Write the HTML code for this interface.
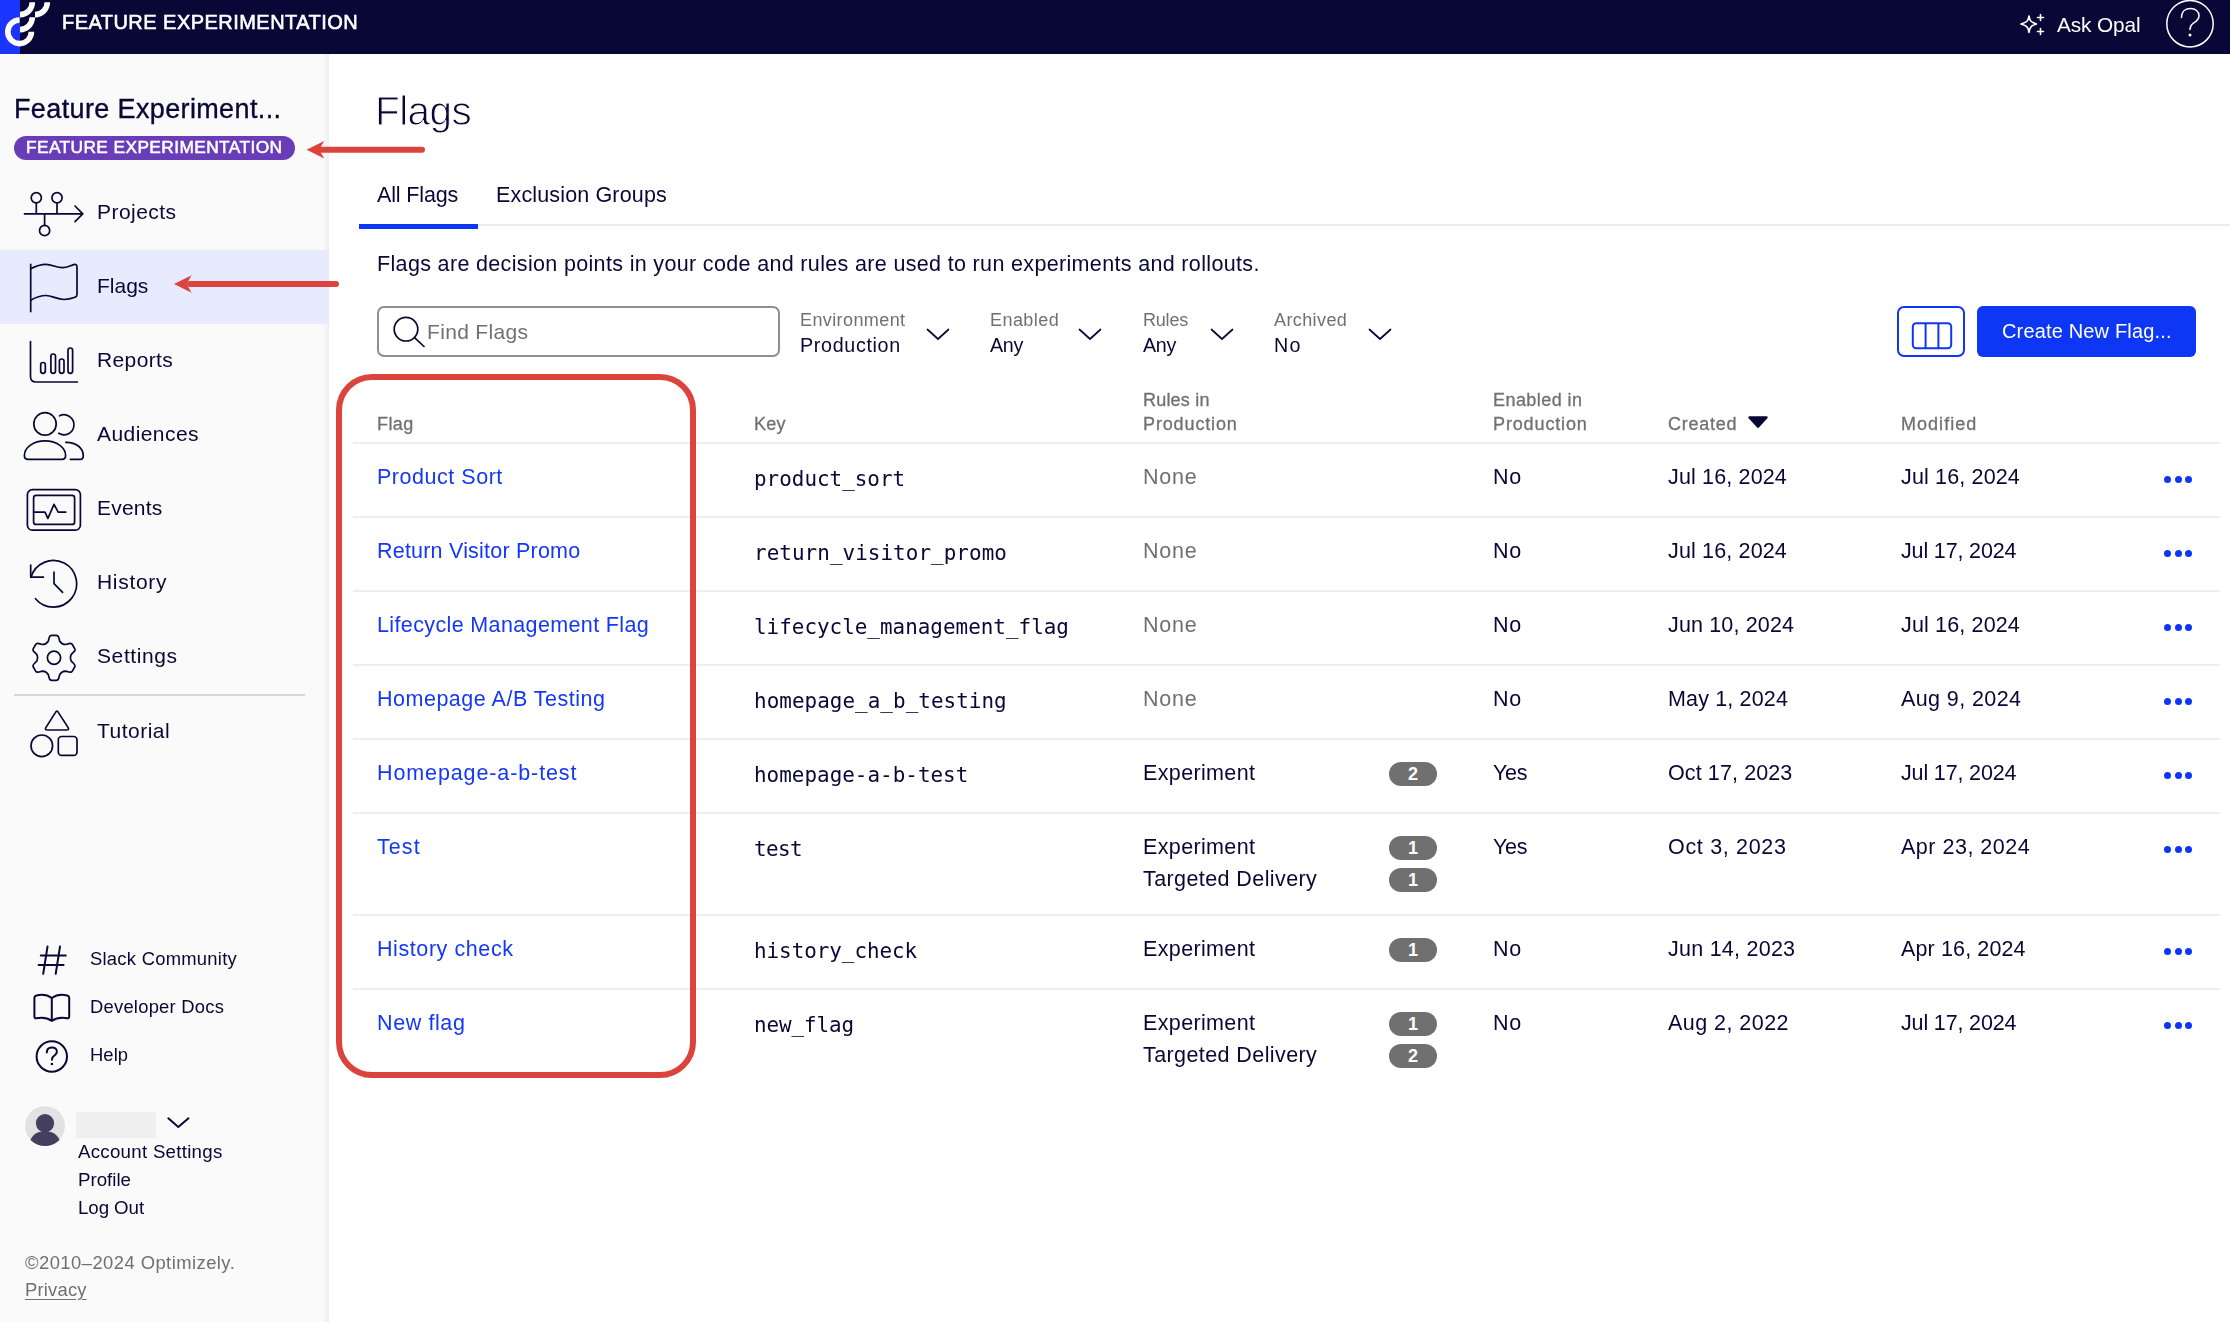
<!DOCTYPE html>
<html lang="en">
<head>
<meta charset="utf-8">
<title>Flags - Feature Experimentation</title>
<style>
*{box-sizing:border-box;margin:0;padding:0}
html,body{width:2230px;height:1322px;overflow:hidden;background:#fff}
body{font-family:"Liberation Sans",Arial,sans-serif;color:#080736;font-size:21.5px;letter-spacing:.35px;position:relative}
.t{position:absolute;white-space:nowrap;line-height:1;will-change:transform}
svg{position:absolute;overflow:visible}
.ic{fill:none;stroke:#080736;stroke-width:1.7;stroke-linecap:round;stroke-linejoin:round}
/* header */
#hdr{position:absolute;left:0;top:0;width:2230px;height:54px;background:#080736}
#stripe{position:absolute;left:0;top:0;width:20px;height:54px;background:#1a35ff}
#brand{left:62px;top:11.9px;font-size:20px;color:#fff;letter-spacing:.12px;-webkit-text-stroke:.6px #fff}
#ask{left:2057px;top:14.8px;font-size:20.8px;color:#fff;letter-spacing:0}
/* sidebar */
#side{position:absolute;left:0;top:54px;width:329px;height:1268px;background:#fafafa;box-shadow:inset -7px 0 6px -5px rgba(0,0,0,.07)}
#proj{left:14px;top:95.9px;font-size:27px;letter-spacing:.2px;-webkit-text-stroke:.35px #080736}
#pill{position:absolute;left:14px;top:136px;width:281px;height:24px;border-radius:12px;background:#6a3db8}
#pilltxt{left:25.5px;top:139.4px;font-size:17.3px;font-weight:400;color:#fff;letter-spacing:.15px;-webkit-text-stroke:.55px #fff}
#active{position:absolute;left:0;top:250px;width:329px;height:74px;background:#e8eafd}
.nav{left:97px;font-size:21px}
#sep{position:absolute;left:14px;top:694px;width:291px;height:2px;background:#d6d6d6}
.sm{font-size:18.4px;letter-spacing:.3px;left:90px}
.acc{font-size:18.7px;letter-spacing:.3px;left:78px}
.cp{font-size:18.4px;letter-spacing:.3px;left:25px;color:#707070}
/* main */
#title{left:375px;top:90.5px;font-size:40.5px;letter-spacing:-.6px;color:#080736;-webkit-text-stroke:1px #fff}
.tab{font-size:21.5px;letter-spacing:.2px}
#tabline{position:absolute;left:359px;top:224px;width:1871px;height:2px;background:#ececec}
#tabsel{position:absolute;left:359px;top:224px;width:119px;height:5px;background:#0d37f5}
#search{position:absolute;left:377px;top:306px;width:403px;height:51px;border:2px solid #8f8f8f;border-radius:7px;background:#fff}
.fl{font-size:18px;letter-spacing:.3px;color:#707070}
.fv{font-size:19.7px;letter-spacing:.35px}
#colbtn{position:absolute;left:1897px;top:306px;width:68px;height:51px;border:2px solid #0d37f5;border-radius:7px}
#create{position:absolute;left:1977px;top:306px;width:219px;height:51px;border-radius:6px;background:#0d37f5}
#createtxt{left:2002px;top:321px;font-size:20px;letter-spacing:.15px;color:#fff}
.th{font-size:18px;letter-spacing:.3px;color:#707070;-webkit-text-stroke:.3px #707070}
.hl{position:absolute;left:353px;width:1867px;height:2px;background:#eeeeee}
.lk{color:#1537f7;left:377px}
.key{font-family:"DejaVu Sans Mono","Liberation Mono",monospace;font-size:20.9px;letter-spacing:0;left:754px}
.rule{left:1143px}
.none{left:1143px;color:#707070}
.en{left:1493px}
.cr{left:1668px}
.md{left:1901px}
.bdg{position:absolute;left:1389px;width:48px;height:24px;border-radius:12px;background:#707070;color:#fff;font-size:18px;font-weight:700;text-align:center;line-height:24px;letter-spacing:0}
.dots{position:absolute;left:2164px;width:28px;height:8px}
.dots i{position:absolute;top:.2px;width:7px;height:7px;border-radius:50%;background:#0d37f5}
#redbox{position:absolute;left:336px;top:374px;width:360px;height:704px;border:6px solid #dc433d;border-radius:36px}
</style>
</head>
<body>
<div id="hdr"><div id="stripe"></div></div>
<div id="side"></div>
<div id="active"></div>
<!--HEADER-->
<svg id="logo" style="left:0;top:0" width="60" height="54" viewBox="0 0 60 54">
  <g fill="none" stroke="#fff" stroke-width="5.6">
    <path d="M19.6 20 A11.8 11.8 0 1 0 31.4 31.8"/>
    <path d="M20 29.6 A12.3 12.3 0 0 0 32.3 17.3"/>
    <path d="M20 14.6 A12.3 12.3 0 0 0 32.3 2.3"/>
    <path d="M35 14.6 A12.3 12.3 0 0 0 47.3 2.3"/>
  </g>
</svg>
<div class="t" id="brand" style="letter-spacing:0.46px;margin-left:0.0px">FEATURE EXPERIMENTATION</div>
<svg style="left:2018px;top:12px" width="30" height="26" viewBox="0 0 30 26">
  <g fill="none" stroke="#fff" stroke-width="1.6" stroke-linecap="round" stroke-linejoin="round">
    <path d="M11 4 C11.8 9 13 10.2 18.5 12 C13 13.8 11.8 15 11 20.5 C10.2 15 9 13.8 3 12 C9 10.2 10.2 9 11 4 Z"/>
    <path d="M22.5 2.5 v6 M19.5 5.5 h6"/>
    <path d="M22.5 16.5 v6 M19.5 19.5 h6"/>
  </g>
</svg>
<div class="t" id="ask" style="letter-spacing:-0.11px;margin-left:0.0px">Ask Opal</div>
<svg style="left:2164px;top:-2px" width="52" height="52" viewBox="0 0 52 52">
  <circle cx="26" cy="25.7" r="23.2" fill="none" stroke="#fff" stroke-width="1.5"/>
  <path d="M17.5 19.5 C17.5 13 22 10.5 26.5 10.5 C31.5 10.5 35 13.5 35 17.8 C35 22 32 23.5 29 25.5 C26.5 27.2 26 28.5 26 31.5" fill="none" stroke="#fff" stroke-width="1.5" stroke-linecap="round"/>
  <circle cx="26" cy="37" r="1.5" fill="#fff"/>
</svg>
<!--/HEADER-->
<!--SIDEBAR-->
<div class="t" id="proj" style="letter-spacing:0.37px;margin-left:0.0px">Feature Experiment...</div>
<div id="pill"></div>
<div class="t" id="pilltxt" style="letter-spacing:0.42px;margin-left:0.0px">FEATURE EXPERIMENTATION</div>
<!-- nav icons -->
<svg style="left:0;top:0" width="329" height="800" viewBox="0 0 329 800" class="ic">
  <!-- projects -->
  <circle cx="36.3" cy="197.7" r="5.1"/><circle cx="57" cy="197.7" r="5.1"/><circle cx="44.6" cy="230.5" r="5.1"/>
  <path d="M24.5 213.8 H82.5 M75 206 L82.8 213.8 L75 221.6 M36.3 202.8 V213.8 M57 202.8 V213.8 M44.6 213.8 V225.4"/>
  <!-- flag -->
  <path d="M30.7 264.4 V311.6"/>
  <path d="M30.7 268.8 C35 266.5 41 264.4 46 264.4 C52 264.4 56 267.7 62.4 267.7 C67 267.7 70.5 265.5 73.6 264.6 Q77 263.8 77 267 V294.5 Q77 296.5 75 297.3 C71 298.8 68 299.5 64 299.5 C57 299.5 52 295.5 46 295.5 C40 295.5 35 297.7 30.7 300.2"/>
  <!-- reports -->
  <path d="M30.5 341.5 V376.5 Q30.5 382 36 382 H77.4"/>
  <rect x="40.7" y="362.5" width="4.6" height="10.8" rx="2.3"/>
  <rect x="50.9" y="354" width="4.6" height="19.3" rx="2.3"/>
  <rect x="59.4" y="359" width="4.6" height="14.3" rx="2.3"/>
  <rect x="68" y="348" width="4.6" height="25.3" rx="2.3"/>
  <!-- audiences -->
  <circle cx="45" cy="423.9" r="11.2"/>
  <path d="M24.4 455.5 C24.4 447.3 33.6 440.8 45 440.8 C56.4 440.8 65.6 447.3 65.6 455.5 Q65.6 459.4 62 459.4 H28 Q24.4 459.4 24.4 455.5 Z"/>
  <path d="M59.6 415.8 A10 10 0 1 1 58.7 433.3"/>
  <path d="M65.8 442.3 C76 442 83.3 448 83.3 456 Q83.3 459.4 79.8 459.4 H70.4"/>
  <!-- events -->
  <rect x="27.4" y="489.6" width="53" height="40.6" rx="5"/>
  <rect x="33.6" y="495.4" width="41" height="29" rx="2.5"/>
  <path d="M33.6 512.1 H45 L47.9 518.4 L54 504.3 L58.2 512.1 H65.8"/>
  <!-- history -->
  <path d="M31 577.3 A23.3 23.3 0 1 1 35.5 598.7"/>
  <path d="M30.7 565 V577.2 H43.4"/>
  <path d="M54 572 V583.6 L62.6 592.4"/>
  <!-- settings -->
  <circle cx="54" cy="657.8" r="6.6"/>
  <path d="M48.27 641.16 L49.20 637.63 Q49.83 635.28 51.66 635.28 L56.34 635.28 Q58.17 635.28 58.80 637.63 L59.73 641.16 Q61.80 644.29 65.55 644.52 L69.07 643.56 Q71.41 642.93 72.33 644.52 L74.67 648.57 Q75.59 650.16 73.86 651.87 L71.28 654.44 Q69.60 657.80 71.28 661.16 L73.86 663.73 Q75.59 665.44 74.67 667.03 L72.33 671.08 Q71.41 672.67 69.07 672.04 L65.55 671.08 Q61.80 671.31 59.73 674.44 L58.80 677.97 Q58.17 680.32 56.34 680.32 L51.66 680.32 Q49.83 680.32 49.20 677.97 L48.27 674.44 Q46.20 671.31 42.45 671.08 L38.93 672.04 Q36.59 672.67 35.67 671.08 L33.33 667.03 Q32.41 665.44 34.14 663.73 L36.72 661.16 Q38.40 657.80 36.72 654.44 L34.14 651.87 Q32.41 650.16 33.33 648.57 L35.67 644.52 Q36.59 642.93 38.93 643.56 L42.45 644.52 Q46.20 644.29 48.27 641.16 Z" stroke-linejoin="round"/>
  <!-- tutorial -->
  <path d="M55.5 712.4 Q56.9 709.9 58.3 712.4 L68 727.4 Q69.6 730 66.6 730 H47.4 Q44.4 730 46 727.4 Z"/>
  <circle cx="41.8" cy="745.8" r="10.8"/>
  <rect x="58.3" y="736.5" width="18.7" height="18.8" rx="3.4"/>
</svg>
<div class="t nav" style="letter-spacing:0.46px;margin-left:0.0px;top:200.7px">Projects</div>
<div class="t nav" style="letter-spacing:-0.00px;margin-left:0.0px;top:274.7px">Flags</div>
<div class="t nav" style="letter-spacing:0.37px;margin-left:0.0px;top:348.7px">Reports</div>
<div class="t nav" style="letter-spacing:0.43px;margin-left:0.0px;top:422.7px">Audiences</div>
<div class="t nav" style="letter-spacing:0.20px;margin-left:0.0px;top:496.7px">Events</div>
<div class="t nav" style="letter-spacing:0.70px;margin-left:0.0px;top:570.7px">History</div>
<div class="t nav" style="letter-spacing:0.60px;margin-left:0.0px;top:644.7px">Settings</div>
<div id="sep"></div>
<div class="t nav" style="letter-spacing:0.49px;margin-left:0.0px;top:720.4px">Tutorial</div>
<!-- bottom links -->
<svg style="left:0;top:900px" width="329" height="260" viewBox="0 900 329 260" class="ic" stroke-width="2">
  <path d="M47.5 946.6 L43.2 973.8 M60 946.6 L55.7 973.8 M40.8 955.5 H65.8 M38.6 965 H63.6" stroke-width="2"/>
  <path d="M51.8 998 V1020.8 M51.8 998 C47 994.6 41 994.4 36.5 995.5 Q34.4 996 34.4 998 V1016.5 Q34.4 1018.6 36.5 1018.2 C42 1017.2 47 1017.6 51.8 1020.8 C56.6 1017.6 61.6 1017.2 67.1 1018.2 Q69.2 1018.6 69.2 1016.5 V998 Q69.2 996 67.1 995.5 C62.6 994.4 56.6 994.6 51.8 998" stroke-width="2"/>
  <circle cx="51.8" cy="1056.5" r="15.2" stroke-width="2"/>
  <path d="M46.8 1052.6 C46.8 1049 49.2 1047.4 51.9 1047.4 C54.8 1047.4 56.9 1049.2 56.9 1051.7 C56.9 1054.2 55.2 1055 53.6 1056.2 C52.2 1057.2 51.9 1058 51.9 1059.8" stroke-width="2"/>
  <circle cx="51.9" cy="1064" r="1.3" fill="#080736" stroke="none"/>
  <path d="M168.3 1118.3 L178.3 1127 L188.5 1118.3" stroke-width="2"/>
</svg>
<div class="t sm" style="letter-spacing:0.26px;margin-left:0.0px;top:950px">Slack Community</div>
<div class="t sm" style="letter-spacing:0.23px;margin-left:0.0px;top:998px">Developer Docs</div>
<div class="t sm" style="letter-spacing:0.07px;margin-left:0.0px;top:1046px">Help</div>
<svg style="left:24px;top:1105px" width="42" height="42" viewBox="0 0 42 42">
  <defs><clipPath id="avc"><circle cx="21" cy="21" r="20"/></clipPath></defs>
  <circle cx="21" cy="21" r="20.5" fill="#fff"/>
  <circle cx="21" cy="21" r="20" fill="#e2e2e2"/>
  <g clip-path="url(#avc)" fill="#43405f">
    <circle cx="21" cy="18.2" r="9.1"/>
    <path d="M4.5 44 C5 31 12 26.2 21 26.2 C30 26.2 37 31 37.5 44 Z"/>
  </g>
</svg>
<div style="position:absolute;left:76px;top:1112px;width:80px;height:26px;background:#efefef"></div>
<div class="t acc" style="letter-spacing:0.27px;margin-left:0.0px;top:1143.0px">Account Settings</div>
<div class="t acc" style="letter-spacing:0.00px;margin-left:0.0px;top:1171.0px">Profile</div>
<div class="t acc" style="letter-spacing:-0.07px;margin-left:0.0px;top:1199.0px">Log Out</div>
<div class="t cp" style="letter-spacing:0.45px;margin-left:0.0px;top:1253.5px">©2010–2024 Optimizely.</div>
<div class="t cp" style="letter-spacing:0.20px;margin-left:0.0px;top:1281.1px;text-decoration:underline;text-underline-offset:3px">Privacy</div>
<!--/SIDEBAR-->
<!--MAIN-->
<div class="t" id="title" style="letter-spacing:-0.60px;margin-left:0.0px">Flags</div>
<div id="tabline"></div><div id="tabsel"></div>
<div class="t tab" style="letter-spacing:-0.15px;margin-left:0.0px;left:377px;top:184.6px">All Flags</div>
<div class="t tab" style="letter-spacing:0.15px;margin-left:0.0px;left:496px;top:184.6px">Exclusion Groups</div>
<div class="t" style="letter-spacing:0.34px;margin-left:0.0px;left:377px;top:254.4px">Flags are decision points in your code and rules are used to run experiments and rollouts.</div>
<div id="search"></div>
<svg style="left:388px;top:312px" width="42" height="40" viewBox="388 312 42 40" class="ic" stroke-width="2">
  <circle cx="406" cy="329.2" r="11.8"/><path d="M414.6 337.6 L424 346.5"/>
</svg>
<div class="t" style="letter-spacing:0.33px;margin-left:0.0px;left:427px;top:321px;color:#707070;font-size:21px">Find Flags</div>
<div class="t fl" style="letter-spacing:0.40px;margin-left:0.0px;left:800px;top:311px">Environment</div>
<div class="t fv" style="letter-spacing:0.67px;margin-left:0.0px;left:800px;top:335.8px">Production</div>
<div class="t fl" style="letter-spacing:0.43px;margin-left:0.0px;left:990px;top:311px">Enabled</div>
<div class="t fv" style="letter-spacing:-0.30px;margin-left:0.0px;left:990px;top:335.8px">Any</div>
<div class="t fl" style="letter-spacing:-0.20px;margin-left:0.0px;left:1143px;top:311px">Rules</div>
<div class="t fv" style="letter-spacing:-0.30px;margin-left:0.0px;left:1143px;top:335.8px">Any</div>
<div class="t fl" style="letter-spacing:0.40px;margin-left:0.0px;left:1274px;top:311px">Archived</div>
<div class="t fv" style="letter-spacing:1.20px;margin-left:0.0px;left:1274px;top:335.8px">No</div>
<svg style="left:900px;top:320px" width="520" height="30" viewBox="900 320 520 30" class="ic" stroke-width="2.2">
  <path d="M927.5 329.5 L938 339 L948.5 329.5"/>
  <path d="M1079.5 329.5 L1090 339 L1100.5 329.5"/>
  <path d="M1211.5 329.5 L1222 339 L1232.5 329.5"/>
  <path d="M1369.5 329.5 L1380 339 L1390.5 329.5"/>
</svg>
<div id="colbtn"></div>
<svg style="left:1910px;top:320px" width="44" height="32" viewBox="1910 320 44 32" fill="none" stroke="#0d37f5" stroke-width="2">
  <rect x="1912.8" y="323.3" width="38.4" height="25" rx="3.5"/><path d="M1925.6 323.3 V348.3 M1938.4 323.3 V348.3"/>
</svg>
<div id="create"></div>
<div class="t" id="createtxt" style="letter-spacing:0.16px;margin-left:0.0px">Create New Flag...</div>
<!--/MAIN-->
<!--TABLE-->
<div class="t th" style="letter-spacing:0.40px;margin-left:0.0px;left:377px;top:415.3px">Flag</div>
<div class="t th" style="letter-spacing:0.30px;margin-left:0.0px;left:754px;top:415.3px">Key</div>
<div class="t th" style="letter-spacing:0.20px;margin-left:0.0px;left:1143px;top:391.3px">Rules in</div>
<div class="t th" style="letter-spacing:0.87px;margin-left:0.0px;left:1143px;top:415.3px">Production</div>
<div class="t th" style="letter-spacing:0.44px;margin-left:0.0px;left:1493px;top:391.3px">Enabled in</div>
<div class="t th" style="letter-spacing:0.87px;margin-left:0.0px;left:1493px;top:415.3px">Production</div>
<div class="t th" style="letter-spacing:0.73px;margin-left:0.0px;left:1668px;top:415.3px">Created</div>
<svg style="left:1745px;top:414px" width="26" height="16" viewBox="1745 414 26 16"><path d="M1749.5 417.5 H1766.5 L1758 426.8 Z" fill="#080736" stroke="#080736" stroke-width="2.4" stroke-linejoin="round"/></svg>
<div class="t th" style="letter-spacing:1.03px;margin-left:0.0px;left:1901px;top:415.3px">Modified</div>
<div class="hl" style="top:442px"></div>
<div class="t lk" style="letter-spacing:0.53px;margin-left:0.0px;top:467.2px">Product Sort</div>
<div class="t key" style="letter-spacing:0.02px;margin-left:0.0px;top:469.4px">product_sort</div>
<div class="t none" style="letter-spacing:0.80px;margin-left:0.0px;top:467.2px">None</div>
<div class="t en" style="letter-spacing:0.60px;margin-left:0.0px;top:467.2px">No</div>
<div class="t cr" style="letter-spacing:0.15px;margin-left:0.0px;top:467.2px">Jul 16, 2024</div>
<div class="t md" style="letter-spacing:0.15px;margin-left:0.0px;top:467.2px">Jul 16, 2024</div>
<div class="dots" style="top:476.3px"><i style="left:.2px"></i><i style="left:10.5px"></i><i style="left:20.8px"></i></div>
<div class="hl" style="top:516px"></div>
<div class="t lk" style="letter-spacing:0.21px;margin-left:0.0px;top:541.2px">Return Visitor Promo</div>
<div class="t key" style="letter-spacing:0.07px;margin-left:0.0px;top:543.4px">return_visitor_promo</div>
<div class="t none" style="letter-spacing:0.80px;margin-left:0.0px;top:541.2px">None</div>
<div class="t en" style="letter-spacing:0.60px;margin-left:0.0px;top:541.2px">No</div>
<div class="t cr" style="letter-spacing:0.15px;margin-left:0.0px;top:541.2px">Jul 16, 2024</div>
<div class="t md" style="letter-spacing:-0.15px;margin-left:0.0px;top:541.2px">Jul 17, 2024</div>
<div class="dots" style="top:550.3px"><i style="left:.2px"></i><i style="left:10.5px"></i><i style="left:20.8px"></i></div>
<div class="hl" style="top:590px"></div>
<div class="t lk" style="letter-spacing:0.37px;margin-left:0.0px;top:615.2px">Lifecycle Management Flag</div>
<div class="t key" style="letter-spacing:0.02px;margin-left:0.0px;top:617.4px">lifecycle_management_flag</div>
<div class="t none" style="letter-spacing:0.80px;margin-left:0.0px;top:615.2px">None</div>
<div class="t en" style="letter-spacing:0.60px;margin-left:0.0px;top:615.2px">No</div>
<div class="t cr" style="letter-spacing:0.15px;margin-left:0.0px;top:615.2px">Jun 10, 2024</div>
<div class="t md" style="letter-spacing:0.15px;margin-left:0.0px;top:615.2px">Jul 16, 2024</div>
<div class="dots" style="top:624.3px"><i style="left:.2px"></i><i style="left:10.5px"></i><i style="left:20.8px"></i></div>
<div class="hl" style="top:664px"></div>
<div class="t lk" style="letter-spacing:0.51px;margin-left:0.0px;top:689.2px">Homepage A/B Testing</div>
<div class="t key" style="letter-spacing:0.06px;margin-left:0.0px;top:691.4px">homepage_a_b_testing</div>
<div class="t none" style="letter-spacing:0.80px;margin-left:0.0px;top:689.2px">None</div>
<div class="t en" style="letter-spacing:0.60px;margin-left:0.0px;top:689.2px">No</div>
<div class="t cr" style="letter-spacing:0.16px;margin-left:0.0px;top:689.2px">May 1, 2024</div>
<div class="t md" style="letter-spacing:0.40px;margin-left:0.0px;top:689.2px">Aug 9, 2024</div>
<div class="dots" style="top:698.3px"><i style="left:.2px"></i><i style="left:10.5px"></i><i style="left:20.8px"></i></div>
<div class="hl" style="top:738px"></div>
<div class="t lk" style="letter-spacing:0.89px;margin-left:0.0px;top:763.2px">Homepage-a-b-test</div>
<div class="t key" style="letter-spacing:0.03px;margin-left:0.0px;top:765.4px">homepage-a-b-test</div>
<div class="t rule" style="letter-spacing:0.36px;margin-left:0.0px;top:763.2px">Experiment</div>
<div class="bdg" style="top:762.0px">2</div>
<div class="t en" style="letter-spacing:-0.30px;margin-left:0.0px;top:763.2px">Yes</div>
<div class="t cr" style="letter-spacing:0.11px;margin-left:0.0px;top:763.2px">Oct 17, 2023</div>
<div class="t md" style="letter-spacing:-0.15px;margin-left:0.0px;top:763.2px">Jul 17, 2024</div>
<div class="dots" style="top:772.3px"><i style="left:.2px"></i><i style="left:10.5px"></i><i style="left:20.8px"></i></div>
<div class="hl" style="top:812px"></div>
<div class="t lk" style="letter-spacing:1.07px;margin-left:0.0px;top:837.2px">Test</div>
<div class="t key" style="letter-spacing:-0.60px;margin-left:0.0px;top:839.4px">test</div>
<div class="t rule" style="letter-spacing:0.36px;margin-left:0.0px;top:837.2px">Experiment</div>
<div class="bdg" style="top:836.0px">1</div>
<div class="t rule" style="letter-spacing:0.41px;margin-left:0.0px;top:869.2px">Targeted Delivery</div>
<div class="bdg" style="top:868.0px">1</div>
<div class="t en" style="letter-spacing:-0.30px;margin-left:0.0px;top:837.2px">Yes</div>
<div class="t cr" style="letter-spacing:0.68px;margin-left:0.0px;top:837.2px">Oct 3, 2023</div>
<div class="t md" style="letter-spacing:0.51px;margin-left:0.0px;top:837.2px">Apr 23, 2024</div>
<div class="dots" style="top:846.3px"><i style="left:.2px"></i><i style="left:10.5px"></i><i style="left:20.8px"></i></div>
<div class="hl" style="top:914px"></div>
<div class="t lk" style="letter-spacing:0.58px;margin-left:0.0px;top:939.2px">History check</div>
<div class="t key" style="letter-spacing:-0.03px;margin-left:0.0px;top:941.4px">history_check</div>
<div class="t rule" style="letter-spacing:0.36px;margin-left:0.0px;top:939.2px">Experiment</div>
<div class="bdg" style="top:938.0px">1</div>
<div class="t en" style="letter-spacing:0.60px;margin-left:0.0px;top:939.2px">No</div>
<div class="t cr" style="letter-spacing:0.25px;margin-left:0.0px;top:939.2px">Jun 14, 2023</div>
<div class="t md" style="letter-spacing:0.13px;margin-left:0.0px;top:939.2px">Apr 16, 2024</div>
<div class="dots" style="top:948.3px"><i style="left:.2px"></i><i style="left:10.5px"></i><i style="left:20.8px"></i></div>
<div class="hl" style="top:988px"></div>
<div class="t lk" style="letter-spacing:0.60px;margin-left:0.0px;top:1013.2px">New flag</div>
<div class="t key" style="letter-spacing:-0.09px;margin-left:0.0px;top:1015.4px">new_flag</div>
<div class="t rule" style="letter-spacing:0.36px;margin-left:0.0px;top:1013.2px">Experiment</div>
<div class="bdg" style="top:1012.0px">1</div>
<div class="t rule" style="letter-spacing:0.41px;margin-left:0.0px;top:1045.2px">Targeted Delivery</div>
<div class="bdg" style="top:1044.0px">2</div>
<div class="t en" style="letter-spacing:0.60px;margin-left:0.0px;top:1013.2px">No</div>
<div class="t cr" style="letter-spacing:0.46px;margin-left:0.0px;top:1013.2px">Aug 2, 2022</div>
<div class="t md" style="letter-spacing:-0.15px;margin-left:0.0px;top:1013.2px">Jul 17, 2024</div>
<div class="dots" style="top:1022.3px"><i style="left:.2px"></i><i style="left:10.5px"></i><i style="left:20.8px"></i></div>
<!--/TABLE-->
<!--ANNOT-->
<div id="redbox"></div>
<svg style="left:300px;top:130px" width="140" height="40" viewBox="300 130 140 40">
  <path d="M321 149.8 H422" stroke="#dc433d" stroke-width="6" stroke-linecap="round" fill="none"/>
  <path d="M306.6 149.8 L324.2 141 L319.2 149.8 L324.2 158.6 Z" fill="#dc433d"/>
</svg>
<svg style="left:165px;top:264px" width="185" height="40" viewBox="165 264 185 40">
  <path d="M190 284 H336" stroke="#dc433d" stroke-width="6" stroke-linecap="round" fill="none"/>
  <path d="M174 284 L191.6 275.2 L186.6 284 L191.6 292.8 Z" fill="#dc433d"/>
</svg>
<!--/ANNOT-->
</body>
</html>
